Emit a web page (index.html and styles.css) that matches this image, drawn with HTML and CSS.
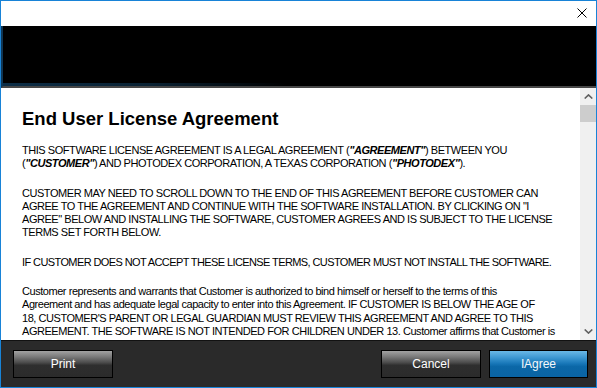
FILE: index.html
```html
<!DOCTYPE html>
<html>
<head>
<meta charset="utf-8">
<link rel="stylesheet" href="styles.css">
</head>
<body>
<div class="window">
  <div class="titlebar">
    <button class="close" aria-label="Close">
      <svg width="10" height="10" viewBox="0 0 10 10"><path d="M0.5 0.5 L9.5 9.5 M9.5 0.5 L0.5 9.5" stroke="#000" stroke-width="1" fill="none"/></svg>
    </button>
  </div>
  <div class="banner"></div>
  <div class="content">
    <div class="doc">
      <h1>End User License Agreement</h1>
      <p>THIS SOFTWARE LICENSE AGREEMENT IS A LEGAL AGREEMENT (<b>"AGREEMENT"</b>) BETWEEN YOU<br>(<b>"CUSTOMER"</b>) AND PHOTODEX CORPORATION, A TEXAS CORPORATION (<b>"PHOTODEX"</b>).</p>
      <p>CUSTOMER MAY NEED TO SCROLL DOWN TO THE END OF THIS AGREEMENT BEFORE CUSTOMER CAN<br>AGREE TO THE AGREEMENT AND CONTINUE WITH THE SOFTWARE INSTALLATION. BY CLICKING ON "I<br>AGREE" BELOW AND INSTALLING THE SOFTWARE, CUSTOMER AGREES AND IS SUBJECT TO THE LICENSE<br>TERMS SET FORTH BELOW.</p>
      <p class="tight">IF CUSTOMER DOES NOT ACCEPT THESE LICENSE TERMS, CUSTOMER MUST NOT INSTALL THE SOFTWARE.</p>
      <p>Customer represents and warrants that Customer is authorized to bind himself or herself to the terms of this<br>Agreement and has adequate legal capacity to enter into this Agreement. IF CUSTOMER IS BELOW THE AGE OF<br>18, CUSTOMER'S PARENT OR LEGAL GUARDIAN MUST REVIEW THIS AGREEMENT AND AGREE TO THIS<br>AGREEMENT. THE SOFTWARE IS NOT INTENDED FOR CHILDREN UNDER 13. Customer affirms that Customer is</p>
    </div>
    <div class="scrollbar">
      <div class="sb-btn">
        <svg width="9" height="5" viewBox="0 0 9 5"><path d="M0.7 4.5 L4.5 0.9 L8.3 4.5" stroke="#606060" stroke-width="1.6" fill="none"/></svg>
      </div>
      <div class="sb-thumb"></div>
      <div class="sb-track"></div>
      <div class="sb-btn">
        <svg width="9" height="5" viewBox="0 0 9 5"><path d="M0.7 0.5 L4.5 4.1 L8.3 0.5" stroke="#606060" stroke-width="1.6" fill="none"/></svg>
      </div>
    </div>
  </div>
  <div class="footer">
    <button class="btn">Print</button>
    <div class="spacer"></div>
    <button class="btn">Cancel</button>
    <button class="btn btn-primary">I Agree</button>
  </div>
</div>
</body>
</html>
```

FILE: styles.css
```css
html, body {
  margin: 0;
  padding: 0;
  background: #fff;
}

.window {
  width: 597px;
  height: 388px;
  box-sizing: border-box;
  border: 1px solid #1883d7;
  display: flex;
  flex-direction: column;
  overflow: hidden;
  font-family: "Liberation Sans", Arial, sans-serif;
}

.titlebar {
  height: 25px;
  flex: none;
  background: #fff;
  display: flex;
  justify-content: flex-end;
  align-items: flex-start;
  padding-top: 7px;
  padding-right: 9px;
  box-sizing: border-box;
}

.close {
  width: 10px;
  height: 10px;
  padding: 0;
  margin: 0;
  border: 0;
  background: transparent;
  display: block;
}
.close svg { display: block; }

.banner {
  flex: none;
  height: 62px;
  background: #000;
  border-left: 2px solid #0f3654;
  border-bottom: 2px solid #474747;
  box-sizing: border-box;
  display: flex;
  flex-direction: column;
  justify-content: flex-end;
}
.banner::after {
  content: "";
  display: block;
  height: 3px;
  background: linear-gradient(to right, #0c2d46 0%, #0a2233 25%, #000 48%);
}

.content {
  flex: 1;
  display: flex;
  min-height: 0;
  background: #fff;
}

.doc {
  flex: 1;
  min-width: 0;
  overflow: hidden;
  padding: 20px 4px 0 21px;
  color: #000;
}

.doc h1 {
  margin: 0 0 15px;
  font-size: 18.5px;
  line-height: 21px;
  font-weight: bold;
}

.doc p {
  margin: 0 0 16px;
  font-size: 11px;
  line-height: 13.3px;
  letter-spacing: -0.45px;
  white-space: nowrap;
}

.doc p.tight {
  letter-spacing: -0.6px;
}

.doc b {
  font-style: italic;
  font-weight: bold;
}

.scrollbar {
  width: 16px;
  flex: none;
  background: #f0f0f0;
  display: flex;
  flex-direction: column;
}
.sb-btn {
  height: 17px;
  display: flex;
  align-items: center;
  justify-content: center;
}
.sb-btn svg { display: block; }
.sb-thumb {
  height: 17px;
  background: #cdcdcd;
}
.sb-track { flex: 1; }

.footer {
  flex: none;
  background: #2a2a2a;
  border-top: 1px solid #111;
  padding: 9px 8px 9px 12px;
  display: flex;
  gap: 8px;
}
.spacer { flex: 1; }

.btn {
  width: 100px;
  height: 28px;
  box-sizing: border-box;
  border: 1px solid #000;
  margin: 0;
  padding: 0;
  font-family: "Liberation Sans", Arial, sans-serif;
  font-size: 12px;
  color: #fff;
  background: linear-gradient(#a2a2a2 0%, #7a7a7a 22%, #4a4a4a 45%, #2e2e2e 55%, #2b2b2b 100%);
}

.btn-primary {
  width: 99px;
  color: #f4f8fb;
  word-spacing: -3px;
  background: linear-gradient(#6ab8e6 0%, #3e98d2 25%, #1877b8 48%, #0b67a7 60%, #0a64a3 100%);
}
```
